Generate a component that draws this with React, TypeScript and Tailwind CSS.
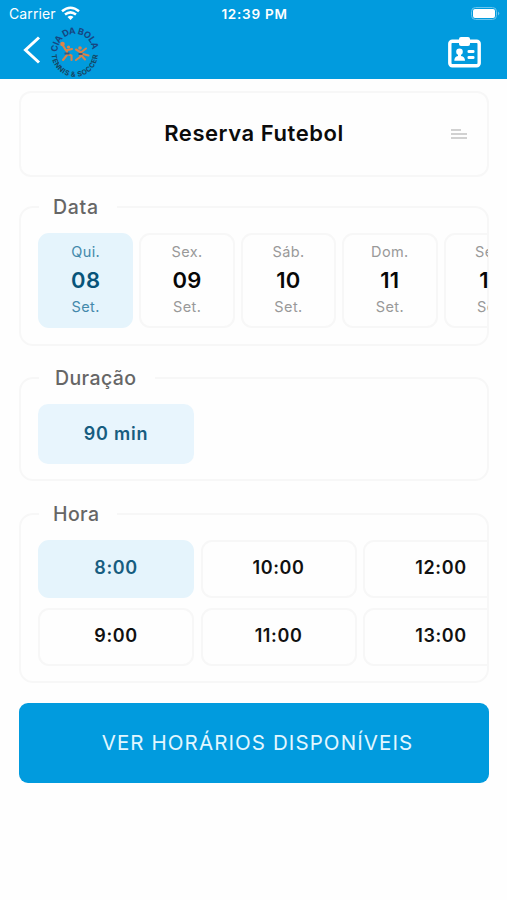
import type { ReactNode } from "react";

const days = [
  { week: "Qui.", day: "08", on: true },
  { week: "Sex.", day: "09" },
  { week: "Sáb.", day: "10" },
  { week: "Dom.", day: "11" },
  { week: "Seg.", day: "12" },
];

const hours = [
  ["8:00", "9:00"],
  ["10:00", "11:00"],
  ["12:00", "13:00"],
];

function Group({ title, legend, className, children }: { title: string; legend: string; className: string; children: ReactNode }) {
  return (
    <fieldset className={`min-w-0 rounded-[14px] border-2 border-[#f7f7f7] ${className}`}>
      <legend className={`ml-[18px] h-6 text-[19.5px] leading-6 font-medium text-[#666] ${legend}`}>{title}</legend>
      <div className="-mr-px overflow-hidden pt-[14px] pl-[17px]">{children}</div>
    </fieldset>
  );
}

function Logo() {
  return (
    <svg width="50" height="52" viewBox="0 0 50 52" className="mt-[1px] ml-[9px] overflow-visible">
      <defs>
        <path id="top" d="M7.6 23.9 A17.4 17.4 0 1 1 41 30" />
        <path id="bottom" d="M1.6 25.6 A23.2 23.2 0 0 0 48 25.6" />
      </defs>
      <g fill="#174681" fontFamily="Inter, sans-serif" fontWeight="700">
        <text fontSize="9">
          <textPath href="#top" startOffset="0" textLength="53.5" lengthAdjust="spacing">CIA DA BOLA</textPath>
        </text>
        <text fontSize="7" fill="#15445f">
          <textPath href="#bottom" startOffset="1" textLength="70" lengthAdjust="spacing">TENNIS &amp; SOCCER</textPath>
        </text>
      </g>
      <g transform="translate(0 1)">
        <path
          d="M13 16.5l3 5 6-1.5M17 21v5l-4 5M17 25l4.500 1.500v4.500M26 20.500l5 3 5-4M31 23l-1 5-4 3M31 26l4 4.500M33 25l5.500 1.500"
          stroke="#d98249"
          strokeWidth="2.1"
          strokeLinecap="round"
          strokeLinejoin="round"
          fill="none"
        />
        <g fill="#df8548">
          <circle cx="12.500" cy="15" r="2.300" />
          <circle cx="18.500" cy="18" r="1.600" />
          <circle cx="30" cy="19" r="1.800" />
        </g>
        <path d="M14.500 24.500h5M28.500 25h4" stroke="#345b83" strokeWidth="2" />
      </g>
    </svg>
  );
}

export default function App() {
  return (
    <div className="h-[900px] w-[507px] overflow-hidden bg-[#fefefe] font-['Inter',sans-serif]">
      <header className="h-[79px] bg-[#019bde] text-white">
        <div className="grid h-[27px] grid-cols-[1fr_auto_1fr] items-center pr-[7px] pl-[9px]">
          <div className="flex items-center gap-[5px]">
            <span className="text-[14px] tracking-[0.1px]">Carrier</span>
            <svg width="19" height="15" viewBox="0 0 19 15" fill="none" stroke="currentColor" strokeWidth="2.5">
              <path d="M1 5.2Q9.5-1.8 18 5.2M4 8.6q5.5-4.4 11 0" />
              <path d="M6.5 11q3-2.4 6 0l-3 3z" fill="currentColor" stroke="none" />
            </svg>
          </div>
          <span className="pt-px text-center text-[13.5px] font-semibold tracking-[0.75px] whitespace-nowrap">12:39 PM</span>
          <svg className="justify-self-end" width="29" height="14" viewBox="0 0 29 14">
            <rect x=".5" y=".5" width="25" height="12" rx="4" fill="none" stroke="#6bc5ed" />
            <rect x="2" y="2" width="22" height="9" rx="2" fill="#fff" />
            <path d="M27 4.500q2.500 2 0 4z" fill="#6bc5ed" />
          </svg>
        </div>
        <div className="flex h-[50px] items-start pr-[26px] pl-[23px]">
          <svg width="18" height="28" viewBox="0 0 18 28" className="mt-[9px]" fill="none" stroke="currentColor" strokeWidth="3">
            <path d="M16 1.5 2.5 14 16 26.5" />
          </svg>
          <Logo />
          <svg width="33" height="31" viewBox="0 0 33 31" className="mt-[10px] ml-auto" fill="currentColor">
            <rect x="1.800" y="4.300" width="29.400" height="24.400" rx="2.500" fill="none" stroke="currentColor" strokeWidth="3.400" />
            <rect x="11" y="0" width="11" height="9" rx="2" />
            <circle cx="11.500" cy="14.800" r="3.300" />
            <path d="M10 16h3v3q4 .8 4 4.700H6.300q0-3.900 3.700-4.700z" />
            <rect x="19.500" y="13" width="7" height="3" rx="1.300" />
            <rect x="19.500" y="19" width="7" height="3" rx="1.300" />
          </svg>
        </div>
      </header>

      <main className="flex flex-col pt-3 pr-[18px] pl-[19px]">
        <section className="grid h-[86px] grid-cols-[1fr_auto_1fr] items-center rounded-[12px] border-2 border-[#f7f7f7]">
          <h1 className="col-start-2 pb-[2px] text-[22px] leading-7 font-semibold tracking-[0.55px] whitespace-nowrap text-[#0b0b0b]">Reserva Futebol</h1>
          <svg className="mr-5 justify-self-end" width="16" height="10" viewBox="0 0 16 10" stroke="#c2c2c2" strokeWidth="1.400">
            <path d="M0 1h10M0 5h16M0 9h16" />
          </svg>
        </section>

        <Group title="Data" legend="w-[78px] pl-[14px] tracking-[0.7px]" className="mt-[18px] h-[151px]">
          <div className="flex gap-[6px]">
            {days.map((d) => (
              <div
                key={d.day}
                className={`flex h-[95px] w-[95.400px] shrink-0 flex-col items-center rounded-[11px] border-2 pt-[6px] text-[14.500px] leading-[22px] tracking-[0.4px] ${
                  d.on ? "border-[#e5f4fc] bg-[#e5f4fc] text-[#4389ab]" : "border-[#f7f7f7] text-[#999]"
                }`}
              >
                <span>{d.week}</span>
                <span className={`mt-[3px] text-[22px] leading-[28px] font-semibold ${d.on ? "text-[#07547a]" : "text-[#070707]"}`}>{d.day}</span>
                <span className="mt-[2px]">Set.</span>
              </div>
            ))}
          </div>
        </Group>

        <Group title="Duração" legend="w-[116px] pl-[16px] tracking-[0.4px]" className="mt-[20px] h-[115px]">
          <div className="flex h-[60px] w-[156px] items-center justify-center rounded-[10px] bg-[#e8f5fd] pb-[2px] text-[18px] font-semibold tracking-[0.8px] text-[#175d80]">
            90 min
          </div>
        </Group>

        <Group title="Hora" legend="w-[78px] pl-[14px] tracking-[0.4px]" className="mt-[21px] h-[181px]">
          <div className="flex gap-[6.500px]">
            {hours.map((pair) => (
              <div key={pair[0]} className="flex shrink-0 flex-col gap-[10px]">
                {pair.map((h) => (
                  <div
                    key={h}
                    className={`flex h-[58px] w-[156px] items-center justify-center rounded-[11px] border-2 pb-[3px] text-[18px] font-semibold tracking-[0.6px] ${
                      h === "8:00" ? "border-[#e5f4fc] bg-[#e5f4fc] text-[#175d80]" : "border-[#f7f7f7] text-[#111]"
                    }`}
                  >
                    {h}
                  </div>
                ))}
              </div>
            ))}
          </div>
        </Group>

        <button className="mt-5 h-[80px] rounded-[9px] bg-[#019bde] pl-[7px] text-[20.500px] tracking-[1.100px] whitespace-nowrap text-[#e2f7ff]">
          VER HORÁRIOS DISPONÍVEIS
        </button>
      </main>
    </div>
  );
}
